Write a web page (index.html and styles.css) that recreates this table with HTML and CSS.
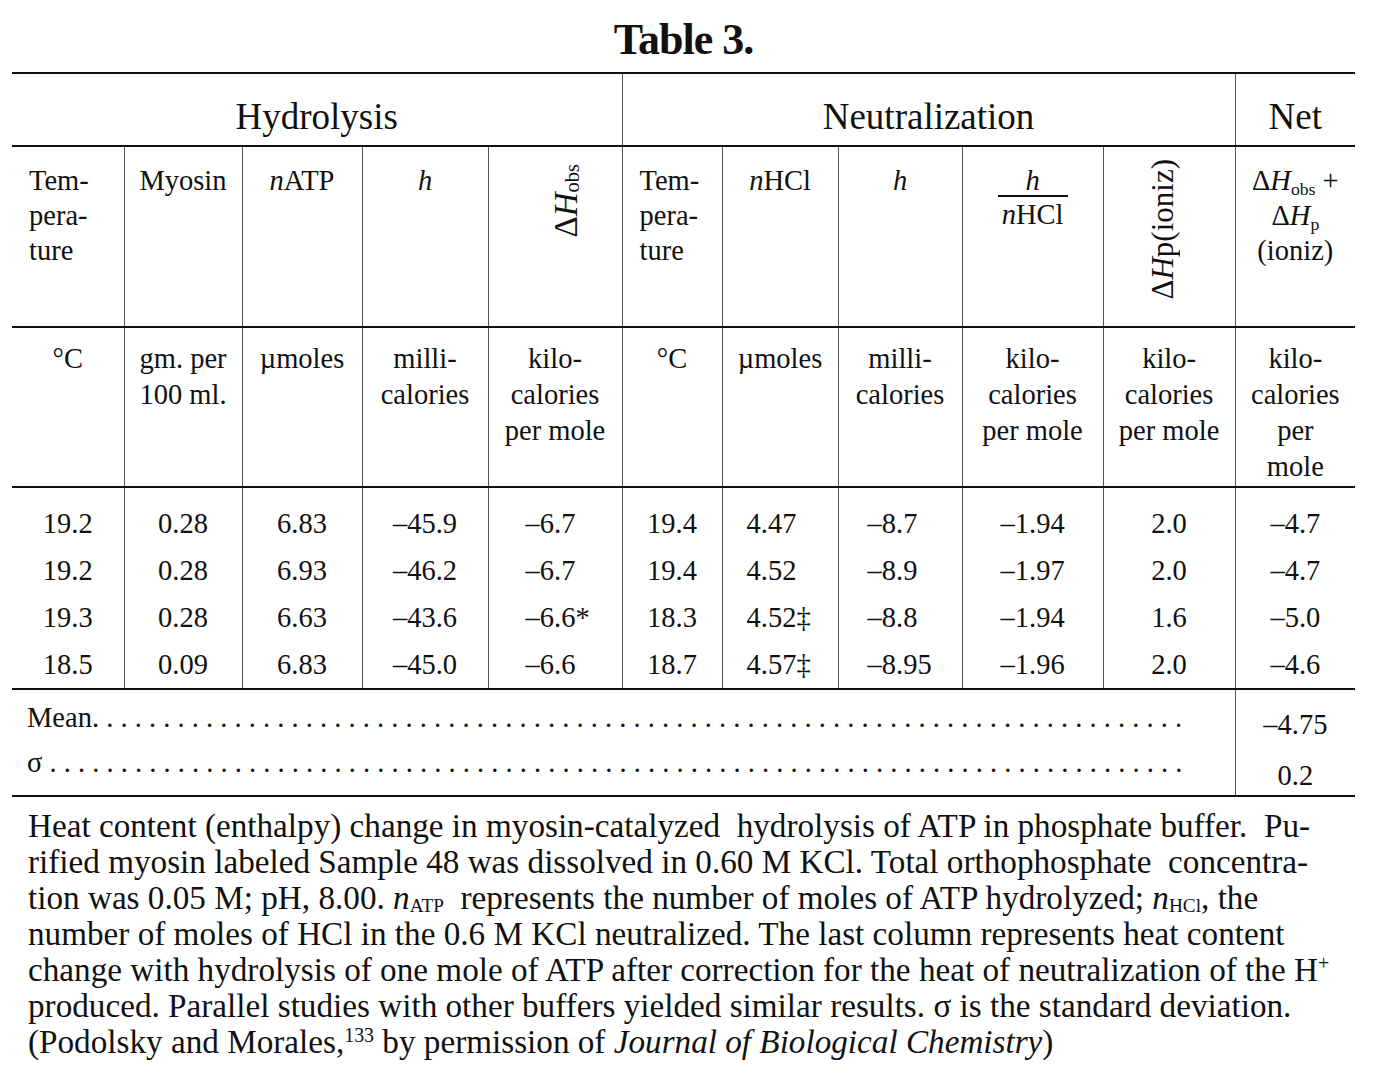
FILE: index.html
```html
<!DOCTYPE html>
<html lang="en">
<head>
<meta charset="utf-8">
<title>Table 3.</title>
<link rel="stylesheet" href="styles.css">
</head>
<body>
<div class="page">
  <h1 class="title">Table 3.</h1>
  <table class="data">
    <colgroup>
      <col class="w112"><col class="w118"><col class="w120"><col class="w126"><col class="w134">
      <col class="w100"><col class="w116"><col class="w124"><col class="w141"><col class="w132"><col class="w120">
    </colgroup>
    <thead>
      <tr class="groups">
        <th colspan="5">Hydrolysis</th>
        <th colspan="5" class="vl">Neutralization</th>
        <th class="vl">Net</th>
      </tr>
      <tr class="heads">
        <th class="left">Tem-<br>pera-<br>ture</th>
        <th class="vl">Myosin</th>
        <th class="vl"><i>n</i>ATP</th>
        <th class="vl"><i>h</i></th>
        <th class="vl rot-obs"><span class="rot">Δ<i>H</i><sub>obs</sub></span></th>
        <th class="vl left">Tem-<br>pera-<br>ture</th>
        <th class="vl"><i>n</i>HCl</th>
        <th class="vl"><i>h</i></th>
        <th class="vl"><span class="frac"><span class="num"><i>h</i></span><span class="den"><i>n</i>HCl</span></span></th>
        <th class="vl rot-p"><span class="rot">Δ<i>H</i>p(ioniz)</span></th>
        <th class="vl">Δ<i>H</i><sub>obs</sub> +<br>Δ<i>H</i><sub>p</sub><br>(ioniz)</th>
      </tr>
      <tr class="units">
        <th>°C</th>
        <th class="vl">gm. per<br>100 ml.</th>
        <th class="vl">µmoles</th>
        <th class="vl">milli-<br>calories</th>
        <th class="vl">kilo-<br>calories<br>per mole</th>
        <th class="vl">°C</th>
        <th class="vl">µmoles</th>
        <th class="vl">milli-<br>calories</th>
        <th class="vl">kilo-<br>calories<br>per mole</th>
        <th class="vl">kilo-<br>calories<br>per mole</th>
        <th class="vl">kilo-<br>calories<br>per<br>mole</th>
      </tr>
    </thead>
    <tbody class="rows">
      <tr class="first">
        <td>19.2</td><td class="vl">0.28</td><td class="vl">6.83</td><td class="vl">–45.9</td><td class="vl l5">–6.7</td>
        <td class="vl">19.4</td><td class="vl l7">4.47</td><td class="vl l8">–8.7</td><td class="vl l9">–1.94</td><td class="vl">2.0</td><td class="vl">–4.7</td>
      </tr>
      <tr>
        <td>19.2</td><td class="vl">0.28</td><td class="vl">6.93</td><td class="vl">–46.2</td><td class="vl l5">–6.7</td>
        <td class="vl">19.4</td><td class="vl l7">4.52</td><td class="vl l8">–8.9</td><td class="vl l9">–1.97</td><td class="vl">2.0</td><td class="vl">–4.7</td>
      </tr>
      <tr>
        <td>19.3</td><td class="vl">0.28</td><td class="vl">6.63</td><td class="vl">–43.6</td><td class="vl l5">–6.6*</td>
        <td class="vl">18.3</td><td class="vl l7">4.52‡</td><td class="vl l8">–8.8</td><td class="vl l9">–1.94</td><td class="vl">1.6</td><td class="vl">–5.0</td>
      </tr>
      <tr class="last">
        <td>18.5</td><td class="vl">0.09</td><td class="vl">6.83</td><td class="vl">–45.0</td><td class="vl l5">–6.6</td>
        <td class="vl">18.7</td><td class="vl l7">4.57‡</td><td class="vl l8">–8.95</td><td class="vl l9">–1.96</td><td class="vl">2.0</td><td class="vl">–4.6</td>
      </tr>
    </tbody>
    <tbody class="stats">
      <tr class="mean">
        <td colspan="10" class="lbl">Mean<span class="leader">. . . . . . . . . . . . . . . . . . . . . . . . . . . . . . . . . . . . . . . . . . . . . . . . . . . . . . . . . . . . . . . . . . . . . . . . . . . . .</span></td>
        <td class="vl val">–4.75</td>
      </tr>
      <tr class="sigma">
        <td colspan="10" class="lbl">σ <span class="leader">. . . . . . . . . . . . . . . . . . . . . . . . . . . . . . . . . . . . . . . . . . . . . . . . . . . . . . . . . . . . . . . . . . . . . . . . . . . . . . . .</span></td>
        <td class="vl val">0.2</td>
      </tr>
    </tbody>
  </table>
  <p class="caption">Heat content (enthalpy) change in myosin-catalyzed&nbsp; hydrolysis of ATP in phosphate buffer.&nbsp; Pu-<br>rified myosin labeled Sample 48 was dissolved in 0.60 M KCl. Total orthophosphate&nbsp; concentra-<br>tion was 0.05 M; pH, 8.00. <i>n</i><sub>ATP</sub>&nbsp; represents the number of moles of ATP hydrolyzed; <i>n</i><sub>HCl</sub>, the<br>number of moles of HCl in the 0.6 M KCl neutralized. The last column represents heat content<br>change with hydrolysis of one mole of ATP after correction for the heat of neutralization of the H<sup>+</sup><br>produced. Parallel studies with other buffers yielded similar results. σ is the standard deviation.<br>(Podolsky and Morales,<sup>133</sup> by permission of <i>Journal of Biological Chemistry</i>)</p>
</div>
</body>
</html>
```

FILE: styles.css
```css
* { box-sizing: border-box; }
html, body { margin: 0; background: #fff; }
body {
  font-family: "Liberation Serif", "Times New Roman", serif;
  color: #111;
}
.page { width: 1374px; padding: 0 19px 0 12px; }

.title {
  width: 1343px;
  margin: 16px 0 9px;
  font-size: 44px;
  letter-spacing: -1px;
  line-height: 47px;
  font-weight: bold;
  text-align: center;
}

table.data {
  width: 1343px;
  table-layout: fixed;
  border-collapse: collapse;
  font-size: 28.5px;
}
.w112 { width: 112px; } .w118 { width: 118px; } .w120 { width: 120px; }
.w126 { width: 126px; } .w134 { width: 134px; } .w100 { width: 100px; }
.w116 { width: 116px; } .w124 { width: 124px; } .w141 { width: 141px; }
.w132 { width: 132px; }

th, td {
  padding: 0;
  font-weight: normal;
  text-align: center;
  vertical-align: top;
}
.vl { border-left: 1px solid #555; }
.left { text-align: left; padding-left: 17px !important; }

.groups th {
  border-top: 2px solid #111;
  border-bottom: 2px solid #111;
  height: 73px;
  padding-top: 22px;
  font-size: 37px;
  line-height: 41px;
}

.heads th {
  height: 181px;
  padding-top: 16px;
  line-height: 35px;
  border-bottom: 2px solid #111;
}
sub {
  font-size: 0.62em;
  line-height: 0;
  vertical-align: -0.28em;
}
sup {
  font-size: 0.6em;
  line-height: 0;
  vertical-align: 0.55em;
}

.rot {
  display: inline-block;
  writing-mode: vertical-rl;
  transform: rotate(180deg);
  line-height: 32px;
  white-space: nowrap;
}
.rot-obs { text-align: left; padding-left: 61px !important; padding-top: 17px !important; font-size: 33px; }
.rot-p { padding-top: 12px !important; padding-right: 12px !important; font-size: 31px; }

.frac {
  display: inline-flex;
  flex-direction: column;
  align-items: center;
}
.frac .num {
  display: block;
  width: 70px;
  line-height: 29px;
  border-bottom: 2px solid #111;
}
.frac .den { display: block; line-height: 36px; }

.units th {
  height: 160px;
  padding-top: 13px;
  line-height: 36px;
  border-bottom: 2px solid #111;
}

.rows td {
  height: 47px;
  line-height: 47px;
}
.rows tr.first td { height: 59px; padding-top: 12px; }
.rows tr.last td { border-bottom: 2px solid #111; height: 48px; }
.rows td.l5 { text-align: left; padding-left: 37px; }
.rows td.l7 { text-align: left; padding-left: 24px; }
.rows td.l8 { text-align: left; padding-left: 29px; }
.rows td.l9 { text-align: left; padding-left: 38px; }

.stats td { line-height: 36px; }
.stats tr.mean td { height: 53px; padding-top: 10px; }
.stats tr.mean td.val { padding-top: 17px; }
.stats tr.sigma td { height: 53px; padding-top: 2px; border-bottom: 2px solid #111; }
.stats tr.sigma td.val { padding-top: 15px; }
.stats td.lbl {
  padding-left: 15px;
  text-align: left;
  white-space: nowrap;
}
.leader { white-space: nowrap; }

.caption {
  margin: 11px 0 0 16px;
  font-size: 33.2px;
  line-height: 36px;
  white-space: nowrap;
}
.caption sub { font-size: 0.58em; vertical-align: -0.14em; }
```
